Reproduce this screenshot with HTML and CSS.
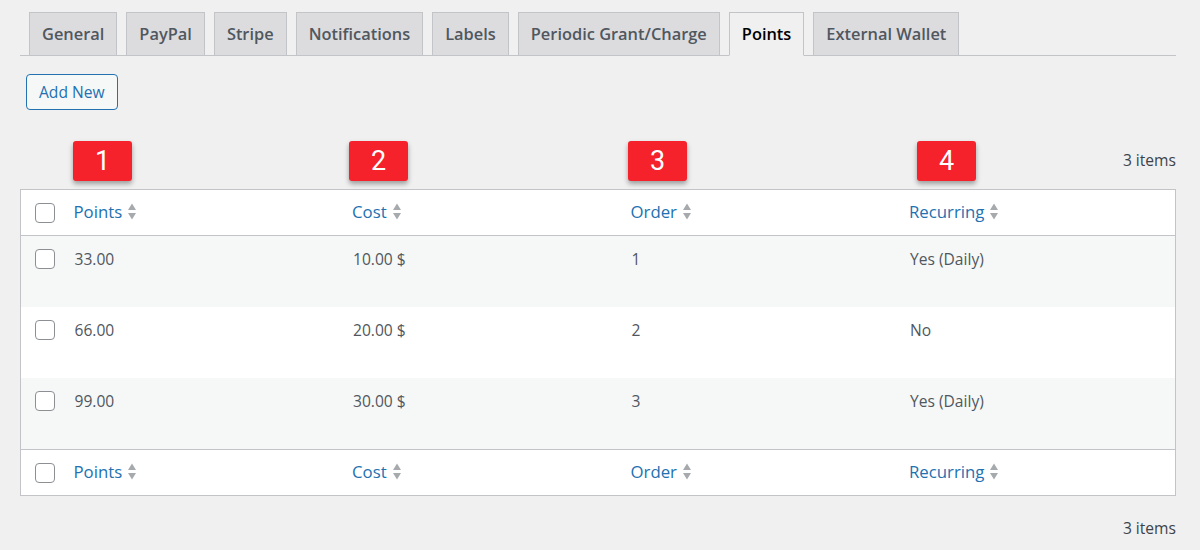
FILE: index.html
```html
<!DOCTYPE html>
<html lang="en">
<head>
<meta charset="utf-8">
<title>Points</title>
<link rel="stylesheet" href="styles.css">
</head>
<body>
<div class="wrap">
  <nav class="tabs">
    <a class="tab">General</a>
    <a class="tab">PayPal</a>
    <a class="tab">Stripe</a>
    <a class="tab">Notifications</a>
    <a class="tab">Labels</a>
    <a class="tab">Periodic Grant/Charge</a>
    <a class="tab active">Points</a>
    <a class="tab">External Wallet</a>
  </nav>

  <div class="actions">
    <a class="button">Add New</a>
  </div>

  <div class="tablenav top">
    <div class="markers">
      <span class="spacer"></span>
      <span class="cell"><span class="badge b1">1</span></span>
      <span class="cell"><span class="badge b2">2</span></span>
      <span class="cell"><span class="badge b3">3</span></span>
      <span class="cell"><span class="badge b4">4</span></span>
    </div>
    <span class="count">3 items</span>
  </div>

  <table class="list">
    <colgroup>
      <col class="c-check"><col class="c-col"><col class="c-col"><col class="c-col"><col class="c-col">
    </colgroup>
    <thead>
      <tr>
        <td class="check"><span class="cb"></span></td>
        <th><a class="sort">Points<svg class="ind" viewBox="0 0 10 18"><path d="M1 8 L5 1.5 L9 8 Z M1 11 L9 11 L5 17.5 Z"/></svg></a></th>
        <th><a class="sort">Cost<svg class="ind" viewBox="0 0 10 18"><path d="M1 8 L5 1.5 L9 8 Z M1 11 L9 11 L5 17.5 Z"/></svg></a></th>
        <th><a class="sort">Order<svg class="ind" viewBox="0 0 10 18"><path d="M1 8 L5 1.5 L9 8 Z M1 11 L9 11 L5 17.5 Z"/></svg></a></th>
        <th><a class="sort">Recurring<svg class="ind" viewBox="0 0 10 18"><path d="M1 8 L5 1.5 L9 8 Z M1 11 L9 11 L5 17.5 Z"/></svg></a></th>
      </tr>
    </thead>
    <tbody>
      <tr class="alt">
        <td class="check"><span class="cb"></span></td>
        <td>33.00</td><td>10.00 $</td><td>1</td><td>Yes (Daily)</td>
      </tr>
      <tr>
        <td class="check"><span class="cb"></span></td>
        <td>66.00</td><td>20.00 $</td><td>2</td><td>No</td>
      </tr>
      <tr class="alt">
        <td class="check"><span class="cb"></span></td>
        <td>99.00</td><td>30.00 $</td><td>3</td><td>Yes (Daily)</td>
      </tr>
    </tbody>
    <tfoot>
      <tr>
        <td class="check"><span class="cb"></span></td>
        <th><a class="sort">Points<svg class="ind" viewBox="0 0 10 18"><path d="M1 8 L5 1.5 L9 8 Z M1 11 L9 11 L5 17.5 Z"/></svg></a></th>
        <th><a class="sort">Cost<svg class="ind" viewBox="0 0 10 18"><path d="M1 8 L5 1.5 L9 8 Z M1 11 L9 11 L5 17.5 Z"/></svg></a></th>
        <th><a class="sort">Order<svg class="ind" viewBox="0 0 10 18"><path d="M1 8 L5 1.5 L9 8 Z M1 11 L9 11 L5 17.5 Z"/></svg></a></th>
        <th><a class="sort">Recurring<svg class="ind" viewBox="0 0 10 18"><path d="M1 8 L5 1.5 L9 8 Z M1 11 L9 11 L5 17.5 Z"/></svg></a></th>
      </tr>
    </tfoot>
  </table>

  <div class="tablenav bottom">
    <span class="count">3 items</span>
  </div>
</div>
</body>
</html>
```

FILE: styles.css
```css
html, body {
  margin: 0;
  padding: 0;
  background: #f0f0f1;
}
body {
  font-family: "Open Sans", "Noto Sans", sans-serif;
  color: #3c434a;
  font-size: 15.6px;
}
.wrap {
  margin: 0 24px 0 20px;
}

/* Tabs */
.tabs {
  display: flex;
  padding: 12px 0 0 9px;
  border-bottom: 1px solid #c3c4c7;
  gap: 9px;
}
.tab {
  display: block;
  height: 44px;
  box-sizing: border-box;
  margin-bottom: -1px;
  padding: 0 12px;
  border: 1px solid #c3c4c7;
  background: #dcdcde;
  color: #50575e;
  font-size: 16.4px;
  font-weight: 600;
  line-height: 41px;
  white-space: nowrap;
}
.tab.active {
  background: #f0f0f1;
  border-bottom-color: #f0f0f1;
  color: #000;
}

/* Add New */
.actions {
  padding: 18px 0 0 6px;
  display: flex;
}
.button {
  display: block;
  height: 36px;
  box-sizing: border-box;
  padding: 1px 12px 0;
  border: 1px solid #2271b1;
  border-radius: 4px;
  background: #f6f7f7;
  color: #2271b1;
  font-size: 15.6px;
  line-height: 33px;
}

/* Top nav with markers */
.tablenav {
  display: flex;
  justify-content: space-between;
}
.tablenav.top {
  height: 79px;
  align-items: flex-start;
}
.markers {
  flex: 1;
  min-width: 0;
  display: grid;
  grid-template-columns: 42px repeat(3, 278.5px) 1fr;
  padding-top: 31px;
}
.cell {
  display: block;
}
.badge {
  display: block;
  width: 59px;
  height: 40px;
  border-radius: 3px;
  background: #f5212b;
  color: #fff;
  font-family: Roboto, "Liberation Sans", sans-serif;
  font-size: 27px;
  line-height: 40px;
  text-align: center;
  box-shadow: 0 3px 5px rgba(0, 0, 0, 0.35);
}
.b1 { margin-left: 11px; }
.b2 { margin-left: 8.5px; }
.b3 { margin-left: 9px; }
.b4 { margin-left: 19.5px; }
.count {
  flex: none;
  white-space: nowrap;
  font-size: 15.6px;
  color: #3c434a;
  line-height: 22px;
}
.tablenav.top .count {
  padding-top: 39px;
}

/* Table */
.list {
  width: 100%;
  border-collapse: collapse;
  border: 1px solid #c3c4c7;
  background: #fff;
  table-layout: fixed;
}
.c-check { width: 41px; }
.list th, .list td {
  text-align: left;
  vertical-align: top;
  padding: 0 12px;
}
.list thead th, .list thead td,
.list tfoot th, .list tfoot td {
  height: 44px;
  vertical-align: middle;
  font-weight: 400;
  font-size: 16.8px;
  padding-top: 0;
  padding-bottom: 0;
}
.list thead th, .list tfoot th {
  padding-bottom: 1px;
}
.list thead tr { border-bottom: 1px solid #c3c4c7; }
.list tfoot tr { border-top: 1px solid #c3c4c7; }
.list td.check {
  padding: 0 0 0 14px;
}
.list thead td.check, .list tfoot td.check {
  padding-top: 1px;
}
.list tbody td {
  height: 71.33px;
  box-sizing: border-box;
  padding-top: 12px;
  padding-left: 13px;
  font-size: 15.6px;
  line-height: 23.4px;
  color: #50575e;
}
.list tbody td.check {
  padding-top: 13px;
  padding-left: 14px;
}
.list tbody tr.alt { background: #f6f7f7; }

.cb {
  display: block;
  width: 20px;
  height: 20px;
  box-sizing: border-box;
  border: 1px solid #8c8f94;
  border-radius: 4px;
  background: #fff;
}

.sort {
  display: inline-flex;
  align-items: center;
  color: #2271b1;
  line-height: 24px;
}
.ind {
  width: 10px;
  height: 18px;
  margin-left: 5px;
  margin-top: -2px;
  fill: #a7aaad;
}

.tablenav.bottom {
  justify-content: flex-end;
}
.tablenav.bottom .count {
  padding-top: 21px;
}
```
